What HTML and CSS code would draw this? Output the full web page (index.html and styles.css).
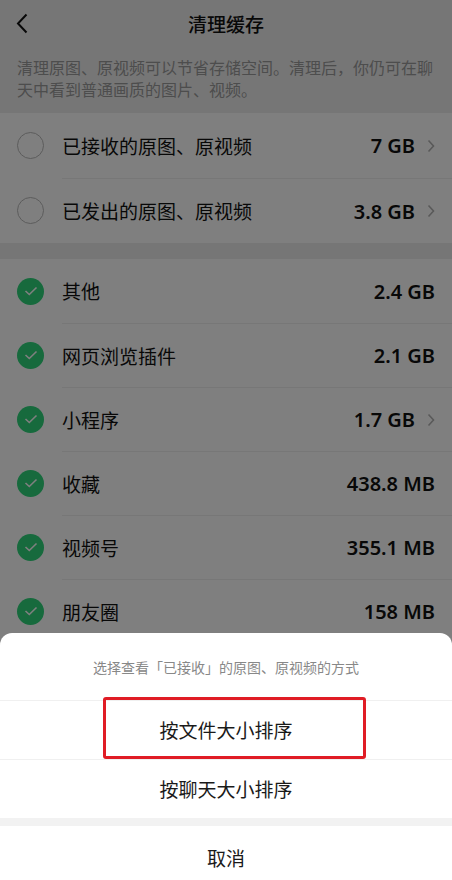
FILE: index.html
```html
<!DOCTYPE html>
<html lang="zh-CN">
<head>
  <meta charset="UTF-8">
  <meta name="viewport" content="width=device-width, initial-scale=1.0">
  <title>清理缓存</title>
  <link rel="stylesheet" href="styles.css">
</head>
<body>
  <div class="page">
    <header class="nav">
      <svg class="back" width="12" height="21" viewBox="0 0 12 21"><path d="M10.5 1.5 L2 10.5 L10.5 19.5" fill="none" stroke="#111" stroke-width="2"/></svg>
      <h1>清理缓存</h1>
    </header>
    <p class="intro">清理原图、原视频可以节省存储空间。清理后，你仍可在聊天中看到普通画质的图片、视频。</p>

    <!-- 原图、原视频 -->
    <div class="group group-top">
      <div class="row">
        <span class="radio"></span>
        <div class="row-main">
          <span class="label">已接收的原图、原视频</span>
          <span class="value">7 GB</span>
          <svg class="arrow" width="8" height="14" viewBox="0 0 8 14"><path d="M1.5 1.5 L6.5 7 L1.5 12.5" fill="none" stroke="#b2b2b2" stroke-width="1.6"/></svg>
        </div>
      </div>
      <div class="row">
        <span class="radio"></span>
        <div class="row-main">
          <span class="label">已发出的原图、原视频</span>
          <span class="value">3.8 GB</span>
          <svg class="arrow" width="8" height="14" viewBox="0 0 8 14"><path d="M1.5 1.5 L6.5 7 L1.5 12.5" fill="none" stroke="#b2b2b2" stroke-width="1.6"/></svg>
        </div>
      </div>
    </div>

    <!-- 其他缓存 -->
    <div class="group">
      <div class="row">
        <span class="check"><svg width="14" height="10" viewBox="0 0 14 10"><path d="M1.5 5 L5.3 8.5 L12.5 1.5" fill="none" stroke="#fff" stroke-width="1.6"/></svg></span>
        <div class="row-main">
          <span class="label">其他</span>
          <span class="value">2.4 GB</span>
        </div>
      </div>
      <div class="row">
        <span class="check"><svg width="14" height="10" viewBox="0 0 14 10"><path d="M1.5 5 L5.3 8.5 L12.5 1.5" fill="none" stroke="#fff" stroke-width="1.6"/></svg></span>
        <div class="row-main">
          <span class="label">网页浏览插件</span>
          <span class="value">2.1 GB</span>
        </div>
      </div>
      <div class="row">
        <span class="check"><svg width="14" height="10" viewBox="0 0 14 10"><path d="M1.5 5 L5.3 8.5 L12.5 1.5" fill="none" stroke="#fff" stroke-width="1.6"/></svg></span>
        <div class="row-main">
          <span class="label">小程序</span>
          <span class="value">1.7 GB</span>
          <svg class="arrow" width="8" height="14" viewBox="0 0 8 14"><path d="M1.5 1.5 L6.5 7 L1.5 12.5" fill="none" stroke="#b2b2b2" stroke-width="1.6"/></svg>
        </div>
      </div>
      <div class="row">
        <span class="check"><svg width="14" height="10" viewBox="0 0 14 10"><path d="M1.5 5 L5.3 8.5 L12.5 1.5" fill="none" stroke="#fff" stroke-width="1.6"/></svg></span>
        <div class="row-main">
          <span class="label">收藏</span>
          <span class="value">438.8 MB</span>
        </div>
      </div>
      <div class="row">
        <span class="check"><svg width="14" height="10" viewBox="0 0 14 10"><path d="M1.5 5 L5.3 8.5 L12.5 1.5" fill="none" stroke="#fff" stroke-width="1.6"/></svg></span>
        <div class="row-main">
          <span class="label">视频号</span>
          <span class="value">355.1 MB</span>
        </div>
      </div>
      <div class="row">
        <span class="check"><svg width="14" height="10" viewBox="0 0 14 10"><path d="M1.5 5 L5.3 8.5 L12.5 1.5" fill="none" stroke="#fff" stroke-width="1.6"/></svg></span>
        <div class="row-main">
          <span class="label">朋友圈</span>
          <span class="value">158 MB</span>
        </div>
      </div>
      <div class="row">
        <span class="check"><svg width="14" height="10" viewBox="0 0 14 10"><path d="M1.5 5 L5.3 8.5 L12.5 1.5" fill="none" stroke="#fff" stroke-width="1.6"/></svg></span>
        <div class="row-main">
          <span class="label">聊天记录</span>
          <span class="value">96 MB</span>
        </div>
      </div>
    </div>
  </div>

  <div class="mask"></div>

  <div class="sheet">
    <div class="sheet-title">选择查看「已接收」的原图、原视频的方式</div>
    <div class="sheet-option selected">按文件大小排序<span class="highlight"></span></div>
    <div class="sheet-option">按聊天大小排序</div>
    <div class="sheet-gap"></div>
    <div class="sheet-option cancel">取消</div>
  </div>
</body>
</html>
```

FILE: styles.css
```css
body {
  margin: 0;
  width: 452px;
  height: 880px;
  overflow: hidden;
  font-family: "Noto Sans", "Noto Sans CJK SC", sans-serif;
  background-color: #ededed;
  color: #111;
}
.page {
  background-color: #ededed;
}
.nav {
  height: 48px;
  display: flex;
  align-items: center;
  justify-content: center;
  position: relative;
}
.nav h1 {
  margin: 0;
  font-size: 19px;
  font-weight: 500;
}
.back {
  position: absolute;
  left: 16px;
  top: 13px;
}
.intro {
  margin: 9px 0 12px;
  padding: 0 17px;
  font-size: 16px;
  line-height: 22px;
  color: #9a9a9a;
}
.group {
  background-color: #fff;
  margin-bottom: 16px;
}
.group-top .row {
  height: 65px;
}
.row {
  display: flex;
  align-items: center;
  height: 64px;
  padding-left: 17px;
}
.radio, .check {
  width: 27px;
  height: 27px;
  border-radius: 50%;
  box-sizing: border-box;
  flex-shrink: 0;
  margin-right: 18px;
}
.radio {
  border: 1.5px solid #b8b8b8;
}
.check {
  background-color: #2ed47a;
  display: flex;
  align-items: center;
  justify-content: center;
}
.row-main {
  flex: 1;
  height: 100%;
  display: flex;
  align-items: center;
  padding-right: 17px;
  border-top: 1px solid #eee;
}
.row:first-child .row-main {
  border-top: none;
}
.label {
  flex: 1;
  font-size: 19px;
}
.value {
  font-size: 20px;
  font-weight: 600;
}
.arrow {
  margin-left: 12px;
}
.mask {
  position: fixed;
  inset: 0;
  background-color: rgba(0, 0, 0, 0.5);
}
.sheet {
  position: fixed;
  left: 0;
  right: 0;
  bottom: 0;
  top: 633px;
  background-color: #fff;
  border-radius: 12px 12px 0 0;
}
.sheet-title {
  height: 67px;
  display: flex;
  align-items: center;
  justify-content: center;
  font-size: 14px;
  color: #888;
  border-bottom: 1px solid #f0f0f0;
}
.sheet-option {
  height: 58px;
  display: flex;
  align-items: center;
  justify-content: center;
  font-size: 19px;
  color: #1a1a1a;
  position: relative;
}
.sheet-option.selected {
  border-bottom: 1px solid #f0f0f0;
}
.sheet-option.cancel {
  height: 64px;
}
.sheet-gap {
  height: 8px;
  background-color: #f2f2f2;
}
.highlight {
  position: absolute;
  left: 103px;
  top: -4px;
  width: 263px;
  height: 62px;
  box-sizing: border-box;
  border: 3px solid #e01c25;
  border-radius: 3px;
}
```
